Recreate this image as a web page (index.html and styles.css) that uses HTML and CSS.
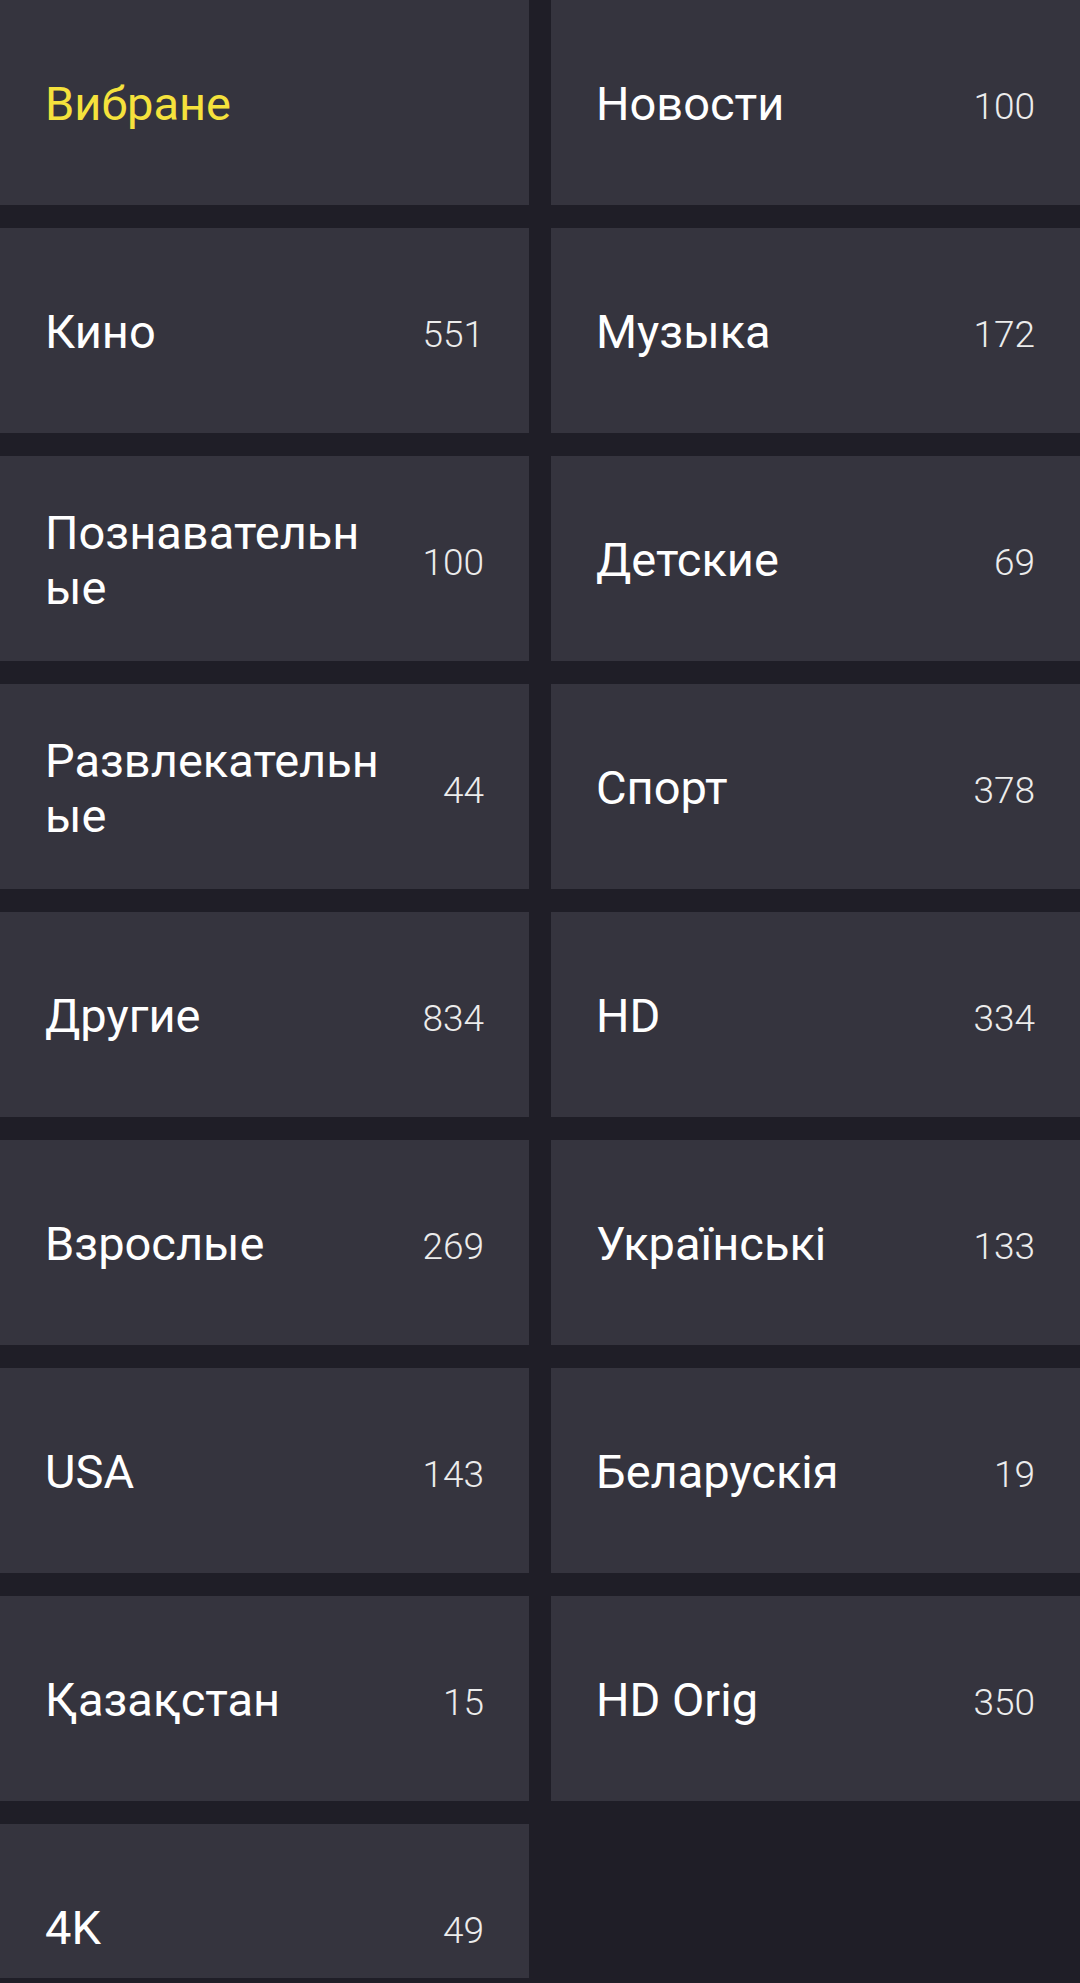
FILE: index.html
```html
<!DOCTYPE html>
<html lang="ru">
<head>
<meta charset="utf-8">
<title>Категории</title>
<link rel="stylesheet" href="styles.css">
</head>
<body>
<main class="grid">
  <div class="tile"><span class="label active">Вибране</span></div>
  <div class="tile"><span class="label">Новости</span><span class="count">100</span></div>
  <div class="tile"><span class="label">Кино</span><span class="count">551</span></div>
  <div class="tile"><span class="label">Музыка</span><span class="count">172</span></div>
  <div class="tile"><span class="label">Познавательные</span><span class="count">100</span></div>
  <div class="tile"><span class="label">Детские</span><span class="count">69</span></div>
  <div class="tile"><span class="label">Развлекательные</span><span class="count">44</span></div>
  <div class="tile"><span class="label">Спорт</span><span class="count">378</span></div>
  <div class="tile"><span class="label">Другие</span><span class="count">834</span></div>
  <div class="tile"><span class="label">HD</span><span class="count">334</span></div>
  <div class="tile"><span class="label">Взрослые</span><span class="count">269</span></div>
  <div class="tile"><span class="label">Українські</span><span class="count">133</span></div>
  <div class="tile"><span class="label">USA</span><span class="count">143</span></div>
  <div class="tile"><span class="label">Беларускія</span><span class="count">19</span></div>
  <div class="tile"><span class="label">Қазақстан</span><span class="count">15</span></div>
  <div class="tile"><span class="label">HD Orig</span><span class="count">350</span></div>
  <div class="tile"><span class="label">4K</span><span class="count">49</span></div>
</main>
<div class="navstrip"></div>
</body>
</html>
```
FILE: styles.css
```css
html, body {
  margin: 0;
  padding: 0;
  background: #1f1e27;
  width: 1080px;
  height: 1983px;
  overflow: hidden;
  font-family: Roboto, "Noto Sans", "DejaVu Sans", sans-serif;
}

.grid {
  display: grid;
  grid-template-columns: 529px 529px;
  grid-auto-rows: 205px;
  column-gap: 22px;
  row-gap: 23px;
}

.tile {
  background: #35343e;
  display: flex;
  align-items: center;
  padding: 2px 45px 0 45px;
  box-sizing: border-box;
}

.label {
  flex: 1;
  max-width: 340px;
  color: #ffffff;
  font-size: 47px;
  line-height: 55px;
  font-weight: 400;
  word-break: break-all;
}

.label.active {
  color: #f5e23c;
}

.count {
  margin-left: auto;
  color: #ececec;
  font-size: 37px;
  font-weight: 300;
  line-height: 1;
  padding-top: 6px;
}

.navstrip {
  position: fixed;
  left: 0;
  right: 0;
  bottom: 0;
  height: 5px;
  background: #1f1e27;
}
```
